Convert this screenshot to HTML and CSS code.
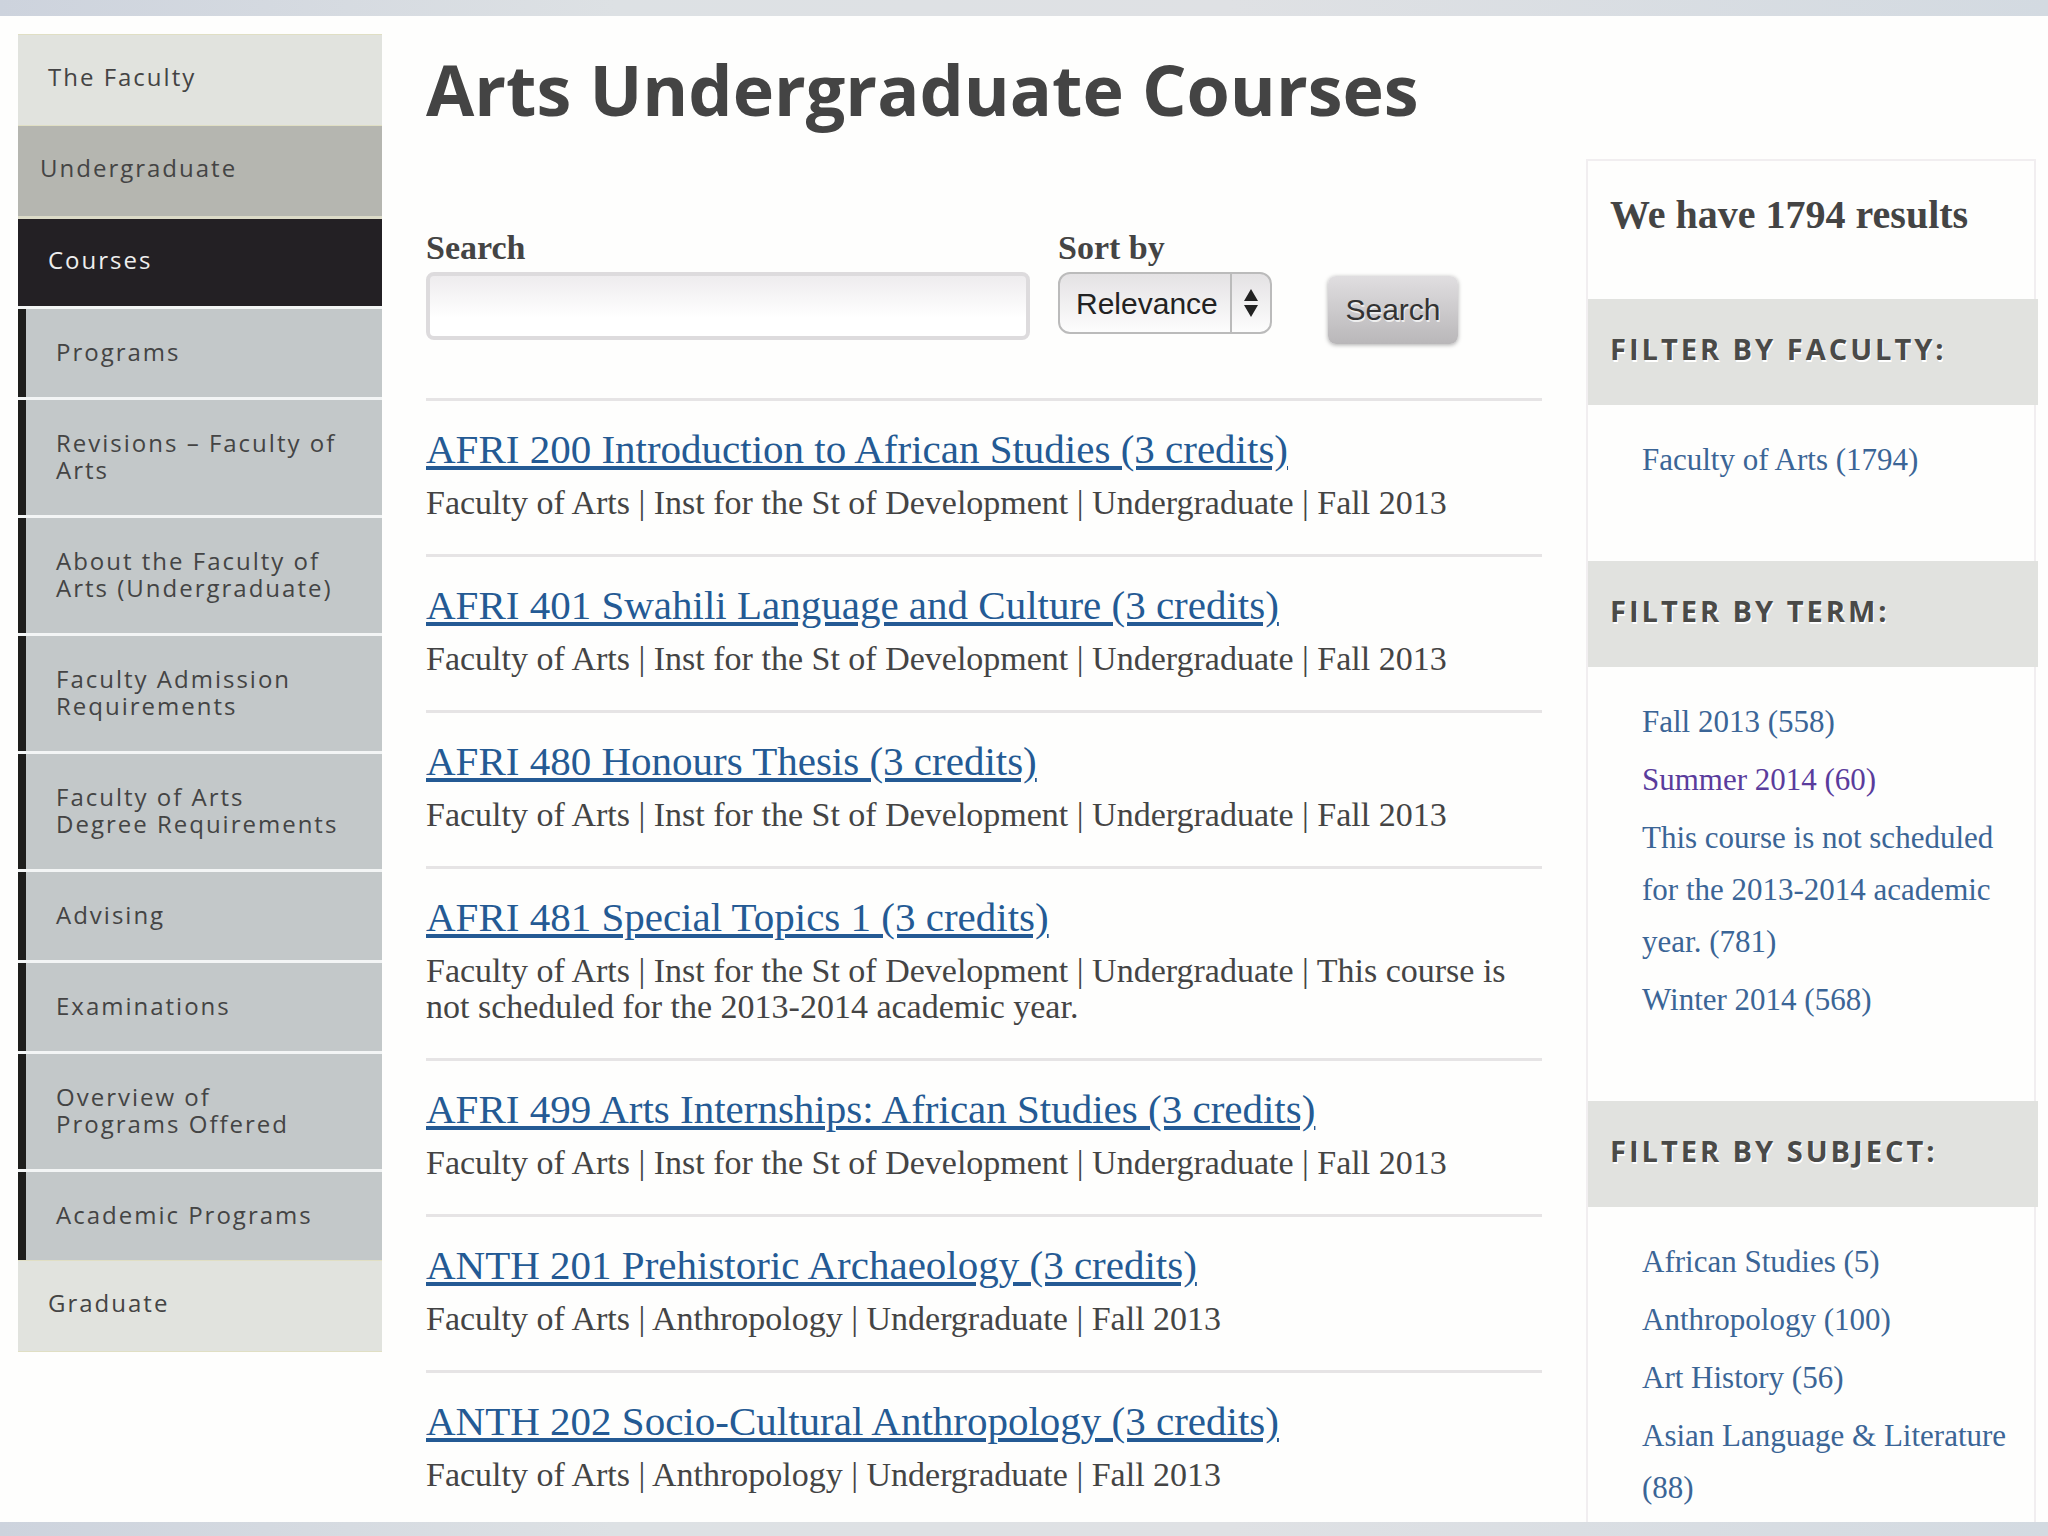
FILE: index.html
```
<!DOCTYPE html>
<html lang="en">
<head>
    <meta charset="UTF-8">
    <title>Arts Undergraduate Courses</title>
    <link rel="stylesheet" href="styles.css">
</head>
<body>
<div class="page">
    <nav class="sidebar">
        <ul class="menu">
            <li><a href="#">The Faculty</a></li>
            <li class="trail"><a href="#">Undergraduate</a></li>
            <li class="active"><a href="#">Courses</a>
                <ul class="submenu">
                    <li><a href="#">Programs</a></li>
                    <li><a href="#">Revisions – Faculty of Arts</a></li>
                    <li><a href="#">About the Faculty of Arts (Undergraduate)</a></li>
                    <li><a href="#">Faculty Admission Requirements</a></li>
                    <li><a href="#">Faculty of Arts Degree Requirements</a></li>
                    <li><a href="#">Advising</a></li>
                    <li><a href="#">Examinations</a></li>
                    <li><a href="#">Overview of Programs Offered</a></li>
                    <li><a href="#">Academic Programs</a></li>
                </ul>
            </li>
            <li><a href="#">Graduate</a></li>
        </ul>
    </nav>

    <main class="content">
        <h1>Arts Undergraduate Courses</h1>
        <form class="search-form">
            <div class="field field-search">
                <label for="search">Search</label>
                <input type="text" id="search">
            </div>
            <div class="field">
                <label for="sort">Sort by</label>
                <div class="select">
                    <select id="sort">
                        <option>Relevance</option>
                        <option>Title</option>
                    </select>
                    <svg class="arrows" width="14" height="28" viewBox="0 0 14 28" aria-hidden="true">
                        <path d="M7 0L14 12H0zM7 28L14 16H0z" fill="#222"/>
                    </svg>
                </div>
            </div>
            <button type="submit">Search</button>
        </form>

        <div class="results">
            <article class="course">
                <h2><a href="#">AFRI 200 Introduction to African Studies (3 credits)</a></h2>
                <p>Faculty of Arts | Inst for the St of Development | Undergraduate | Fall 2013</p>
            </article>
            <article class="course">
                <h2><a href="#">AFRI 401 Swahili Language and Culture (3 credits)</a></h2>
                <p>Faculty of Arts | Inst for the St of Development | Undergraduate | Fall 2013</p>
            </article>
            <article class="course">
                <h2><a href="#">AFRI 480 Honours Thesis (3 credits)</a></h2>
                <p>Faculty of Arts | Inst for the St of Development | Undergraduate | Fall 2013</p>
            </article>
            <article class="course">
                <h2><a href="#">AFRI 481 Special Topics 1 (3 credits)</a></h2>
                <p>Faculty of Arts | Inst for the St of Development | Undergraduate | This course is not scheduled for the 2013-2014 academic year.</p>
            </article>
            <article class="course">
                <h2><a href="#">AFRI 499 Arts Internships: African Studies (3 credits)</a></h2>
                <p>Faculty of Arts | Inst for the St of Development | Undergraduate | Fall 2013</p>
            </article>
            <article class="course">
                <h2><a href="#">ANTH 201 Prehistoric Archaeology (3 credits)</a></h2>
                <p>Faculty of Arts | Anthropology | Undergraduate | Fall 2013</p>
            </article>
            <article class="course">
                <h2><a href="#">ANTH 202 Socio-Cultural Anthropology (3 credits)</a></h2>
                <p>Faculty of Arts | Anthropology | Undergraduate | Fall 2013</p>
            </article>
        </div>
    </main>

    <aside class="filters">
        <p class="total">We have 1794 results</p>
        <h3>Filter by faculty:</h3>
        <ul>
            <li><a href="#">Faculty of Arts (1794)</a></li>
        </ul>
        <h3>Filter by term:</h3>
        <ul>
            <li><a href="#">Fall 2013 (558)</a></li>
            <li><a href="#" class="visited">Summer 2014 (60)</a></li>
            <li><a href="#">This course is not scheduled for the 2013-2014 academic year. (781)</a></li>
            <li><a href="#">Winter 2014 (568)</a></li>
        </ul>
        <h3>Filter by subject:</h3>
        <ul>
            <li><a href="#">African Studies (5)</a></li>
            <li><a href="#">Anthropology (100)</a></li>
            <li><a href="#">Art History (56)</a></li>
            <li><a href="#">Asian Language &amp; Literature (88)</a></li>
        </ul>
    </aside>
</div>
</body>
</html>
```
FILE: styles.css
```
* {
    box-sizing: border-box;
}

body {
    margin: 0;
    padding: 16px 0 14px;
    height: 100vh;
    background: linear-gradient(90deg, #cdd3dd, #dde1e4 30%, #dfe1e4 60%, #d3dae1);
    font-family: "Liberation Serif", serif;
    color: #444;
}

h1, h2, h3, p, ul {
    margin: 0;
    padding: 0;
}

ul {
    list-style: none;
}

a {
    color: #245a94;
}

.page {
    display: flex;
    align-items: flex-start;
    height: 100%;
    padding: 18px 12px 0 18px;
    overflow: hidden;
    background: #fefefd;
}

/* left menu */
.sidebar {
    flex: 0 0 364px;
    font-family: "Open Sans", sans-serif;
    font-size: 24px;
    font-weight: 500;
    line-height: 27px;
    letter-spacing: 2px;
}

.menu a {
    display: block;
    padding: 28px 30px 35px;
    background: #e1e3de;
    border-top: 1px solid #e0dfc4;
    color: #444;
    text-decoration: none;
}

.menu > .trail > a {
    padding-left: 22px;
    background: #b5b6b0;
}

.menu > .active > a {
    padding-top: 27px;
    padding-bottom: 33px;
    background: #232024;
    border-top: 3px solid #dcdbc8;
    color: #eee;
}

.menu .submenu a {
    padding: 29px 40px 32px 38px;
    border-top: 3px solid #f3f5f5;
    background: linear-gradient(90deg, #1e1e1c 8px, #c3c8c9 8px);
}

.menu > li:last-child > a {
    border-bottom: 1px solid #e0dfc4;
}

/* main column */
.content {
    flex: 1;
    min-width: 0;
    margin: 0 44px;
    padding-top: 15px;
}

h1 {
    font: bold 70px/80px "Open Sans", sans-serif;
}

.search-form {
    display: flex;
    align-items: flex-start;
    margin-top: 101px;
    height: 168px;
}

.field {
    margin-right: 28px;
}

.field-search {
    flex: 0 1 604px;
}

label {
    display: block;
    margin-bottom: 6px;
    font-size: 34px;
    font-weight: bold;
    line-height: 36px;
}

.field-search input {
    display: block;
    width: 100%;
    height: 68px;
    padding: 0 16px;
    border: 4px solid #dddbdd;
    border-radius: 8px;
    background: linear-gradient(#eeecee, #fff 70%);
    font: 30px "Liberation Sans", sans-serif;
}

.select {
    position: relative;
}

.select select {
    display: block;
    width: 214px;
    height: 62px;
    padding: 0 16px;
    appearance: none;
    border: 2px solid #bbb;
    border-radius: 12px;
    background: linear-gradient(90deg, transparent 170px, #bbb 170px, #bbb 172px, transparent 172px), linear-gradient(#e4e2e4, #fdfdfd);
    color: #222;
    font: 30px "Liberation Sans", sans-serif;
}

.arrows {
    position: absolute;
    top: 17px;
    right: 14px;
    pointer-events: none;
}

.search-form button {
    margin: 46px 0 0 28px;
    width: 130px;
    height: 68px;
    padding: 0;
    border: 0;
    border-radius: 8px;
    background: linear-gradient(#e0dee0, #b9b7b9);
    box-shadow: 0 1px 4px #aaa;
    color: #333;
    font: 30px "Liberation Sans", sans-serif;
    text-shadow: 1px 2px 0 #eee;
}

.course {
    padding: 24px 0 33px;
    border-top: 3px solid #e6e4e5;
}

.course h2 {
    margin-bottom: 12px;
    font-size: 41px;
    font-weight: normal;
    line-height: 48px;
}

.course p {
    font-size: 34px;
    line-height: 36px;
}

/* right column */
.filters {
    flex: 0 0 450px;
    margin-top: 125px;
    border: 2px solid #f1eef0;
}

.total {
    padding: 33px 22px 63px;
    font-size: 40px;
    font-weight: bold;
    line-height: 42px;
}

.filters h3 {
    margin-right: -4px;
    padding: 32px 22px 38px;
    background: #e1e2df;
    color: #4a4a48;
    font: bold 29px/36px "Open Sans", sans-serif;
    letter-spacing: 3px;
    text-transform: uppercase;
    text-shadow: 1px 2px 0 #fff;
}

.filters ul {
    padding: 29px 16px 69px 54px;
}

.filters li {
    margin-bottom: 6px;
    font-size: 31px;
    line-height: 52px;
}

.filters a {
    color: #3b6596;
    text-decoration: none;
}

.filters .visited {
    color: #5a3c9c;
}
```
